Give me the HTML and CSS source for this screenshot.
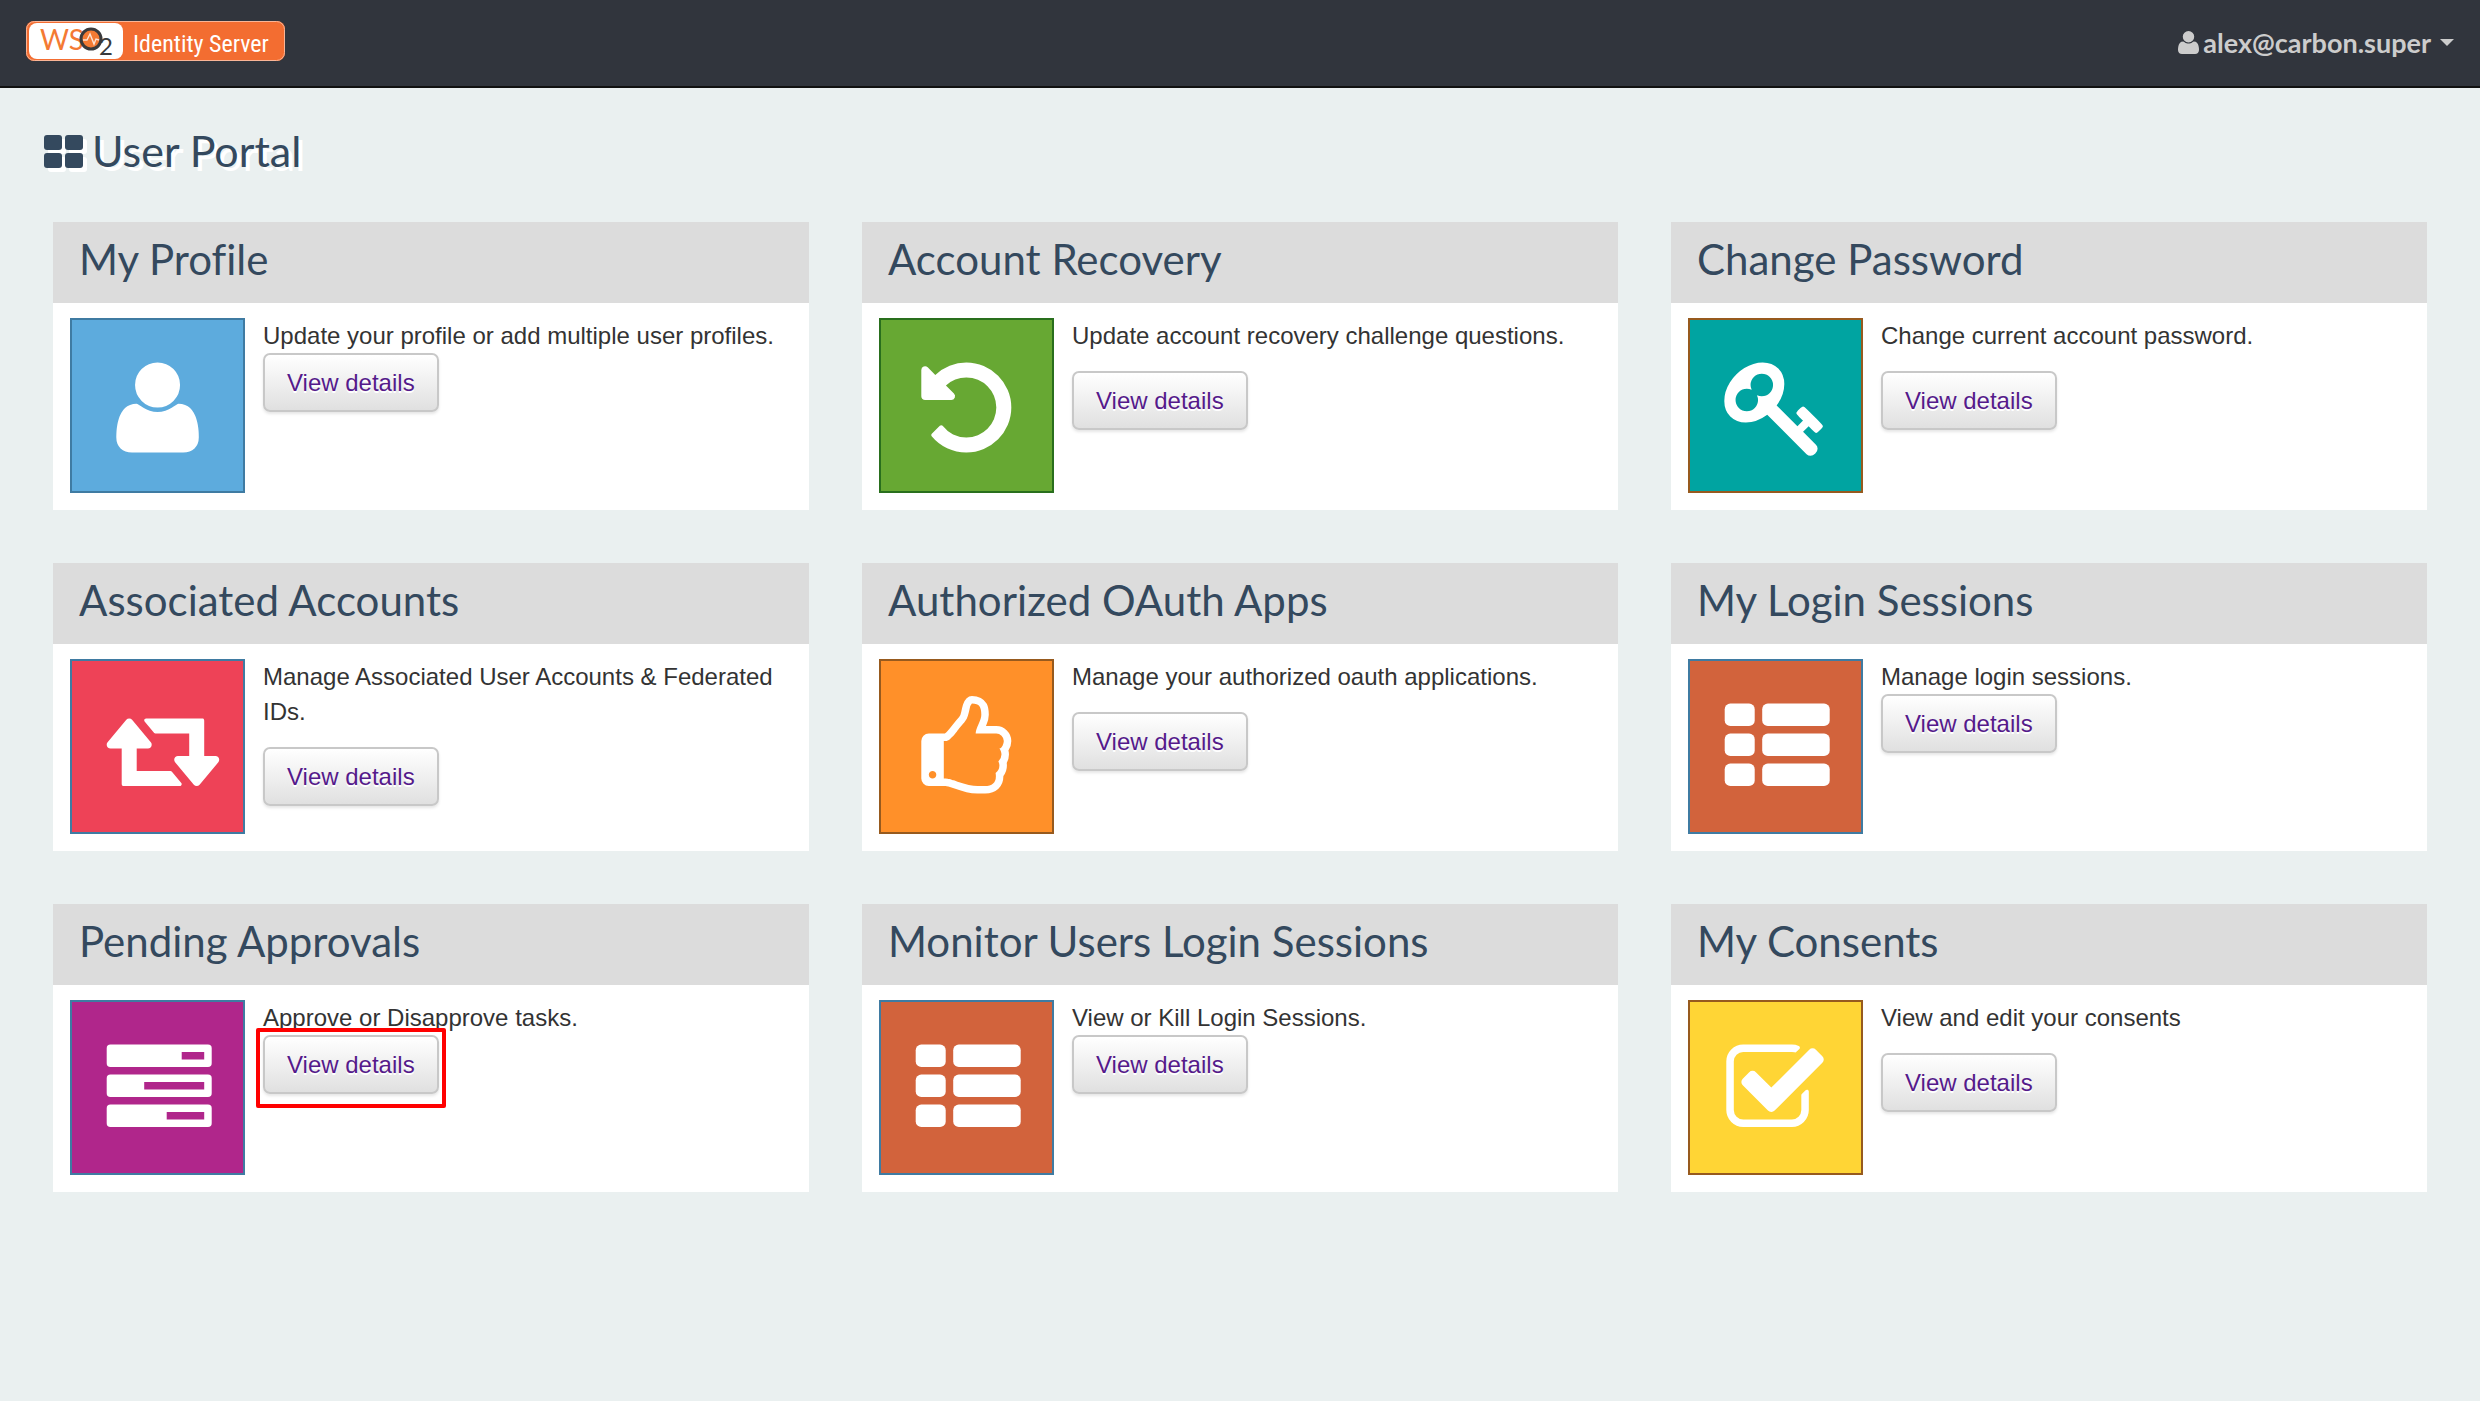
FILE: index.html
```html
<!DOCTYPE html>
<html lang="en">
<head>
<meta charset="utf-8">
<meta name="viewport" content="width=device-width, initial-scale=1">
<title>WSO2 Identity Server - User Portal</title>
<link rel="stylesheet" href="styles.css">
</head>
<body>
<header class="navbar">
  <a class="brand" href="#" aria-label="WSO2 Identity Server">
    <svg class="brand-logo" viewBox="0 0 259 40">
      <rect width="259" height="40" rx="8" fill="#f36d31"/>
      <rect x=".5" y=".5" width="258" height="39" rx="8" fill="none" stroke="#f9b597" stroke-width="1"/>
      <rect x="3" y="2" width="94" height="36" rx="8" fill="#fff"/>
      <text class="logo-ws" x="14" y="29">WS</text>
      <circle cx="65" cy="18" r="10" fill="#f47a33" stroke="#3a3a3c" stroke-width="3"/>
      <path d="M57 19h4l3-6 4 10 2-5 3 1" fill="none" stroke="#fde3d5" stroke-width="1.4"/>
      <text class="logo-two" x="73" y="34">2</text>
      <text class="logo-name" x="107" y="31">Identity Server</text>
    </svg>
  </a>
  <button class="user-menu" type="button">
    <svg class="user-icon" viewBox="0 0 1408 1536"><use href="#i-user" transform="translate(0 1408) scale(1 -1)"/></svg>
    <span>alex@carbon.super</span>
    <span class="caret"></span>
  </button>
</header>

<svg class="sprite" aria-hidden="true">
  <defs>
    <path id="i-user" d="M1408 131q0 -120 -73 -189.5t-194 -69.5h-874q-121 0 -194 69.5t-73 189.5q0 53 3.5 103.5t14 109t26.5 108.5t43 97.5t62 81t85.5 53.5t111.5 20q9 0 42 -21.5t74.5 -48t108 -48t133.5 -21.5t133.5 21.5t108 48t74.5 48t42 21.5q61 0 111.5 -20t85.5 -53.5t62 -81t43 -97.5t26.5 -108.5t14 -109t3.5 -103.5zM1088 1024q0 -159 -112.5 -271.5t-271.5 -112.5t-271.5 112.5t-112.5 271.5t112.5 271.5t271.5 112.5t271.5 -112.5t112.5 -271.5z"/>
    <g id="i-list">
      <rect y="0" width="512" height="384" rx="96"/><rect x="640" y="0" width="1152" height="384" rx="96"/>
      <rect y="512" width="512" height="384" rx="96"/><rect x="640" y="512" width="1152" height="384" rx="96"/>
      <rect y="1024" width="512" height="384" rx="96"/><rect x="640" y="1024" width="1152" height="384" rx="96"/>
    </g>
  </defs>
</svg>

<main class="page">
  <h1 class="page-title">
    <svg class="title-icon" viewBox="0 0 40 33"><rect width="18" height="15" rx="3"/><rect x="21" width="18" height="15" rx="3"/><rect y="18" width="18" height="15" rx="3"/><rect x="21" y="18" width="18" height="15" rx="3"/></svg>
    <span>User Portal</span>
  </h1>

  <div class="cards">
    <section class="card">
      <h2 class="card-title">My Profile</h2>
      <div class="card-body">
        <div class="tile tile-blue"><svg viewBox="2 2 171 171"><use href="#i-user" transform="translate(46.3 127) scale(.0586 -.0586)"/></svg></div>
        <div class="info compact"><p>Update your profile or add multiple user profiles.</p><a class="btn" href="#">View details</a></div>
      </div>
    </section>

    <section class="card">
      <h2 class="card-title">Account Recovery</h2>
      <div class="card-body">
        <div class="tile tile-green"><svg viewBox="2 2 171 171"><path transform="translate(42.3 127) scale(.0586 -.0586)" d="M1536 640q0 -156 -61 -298t-164 -245t-245 -164t-298 -61q-172 0 -327 72.5t-264 204.5q-7 10 -6.5 22.5t8.5 20.5l137 138q10 9 25 9q16 -2 23 -12q73 -95 179 -147t225 -52q104 0 198.5 40.5t163.5 109.5t109.5 163.5t40.5 198.5t-40.5 198.5t-109.5 163.5t-163.5 109.5t-198.5 40.5q-98 0 -188 -35.5t-160 -101.5l137 -138q31 -30 14 -69q-17 -40 -59 -40h-448q-26 0 -45 19t-19 45v448q0 42 40 59q39 17 69 -14l130 -129q107 101 244.5 156.5t284.5 55.5q156 0 298 -61t245 -164t164 -245t61 -298z"/></svg></div>
        <div class="info"><p>Update account recovery challenge questions.</p><a class="btn" href="#">View details</a></div>
      </div>
    </section>

    <section class="card">
      <h2 class="card-title">Change Password</h2>
      <div class="card-body">
        <div class="tile tile-teal"><svg viewBox="2 2 171 171"><path transform="translate(36.3 127) scale(.0586 -.0586)" d="M832 1024q0 80 -56 136t-136 56t-136 -56t-56 -136q0 -42 19 -83q-41 19 -83 19q-80 0 -136 -56t-56 -136t56 -136t136 -56t136 56t56 136q0 42 -19 83q41 -19 83 -19q80 0 136 56t56 136zM1683 320q0 -17 -49 -66t-66 -49q-9 0 -28.5 16t-36.5 33t-38.5 40t-24.5 26l-96 -96l220 -220q28 -28 28 -68q0 -42 -39 -81t-81 -39q-40 0 -68 28l-671 671q-176 -131 -365 -131q-163 0 -265.5 102.5t-102.5 265.5q0 160 95 313t248 248t313 95q163 0 265.5 -102.5t102.5 -265.5q0 -189 -131 -365l355 -355l96 96q-3 3 -26 24.5t-40 38.5t-33 36.5t-16 28.5q0 17 49 66t66 49q13 0 23 -10q6 -6 46 -44.5t82 -79.5t86.5 -86t73 -78t28.5 -41z"/></svg></div>
        <div class="info"><p>Change current account password.</p><a class="btn" href="#">View details</a></div>
      </div>
    </section>

    <section class="card">
      <h2 class="card-title">Associated Accounts</h2>
      <div class="card-body">
        <div class="tile tile-red"><svg viewBox="2 2 171 171"><path transform="translate(36.7 127) scale(.0586 -.0586)" d="M1280 32q0 -13 -9.5 -22.5t-22.5 -9.5h-960q-8 0 -13.5 2t-9 7t-5.5 8t-3 11.5t-1 11.5v13v11v160v416h-192q-26 0 -45 19t-19 45q0 24 15 41l320 384q19 22 49 22t49 -22l320 -384q15 -17 15 -41q0 -26 -19 -45t-45 -19h-192v-384h576q16 0 25 -11l160 -192q7 -10 7 -21zM1920 448q0 -24 -15 -41l-320 -384q-20 -23 -49 -23t-49 23l-320 384q-15 17 -15 41q0 26 19 45t45 19h192v384h-576q-16 0 -25 12l-160 192q-7 9 -7 20q0 13 9.5 22.5t22.5 9.5h960q8 0 13.5 -2t9 -7t5.5 -8t3 -11.5t1 -11.5v-13v-11v-160v-416h192q26 0 45 -19t19 -45z"/></svg></div>
        <div class="info"><p>Manage Associated User Accounts &amp; Federated IDs.</p><a class="btn" href="#">View details</a></div>
      </div>
    </section>

    <section class="card">
      <h2 class="card-title">Authorized OAuth Apps</h2>
      <div class="card-body">
        <div class="tile tile-orange"><svg viewBox="2 2 171 171"><path transform="translate(42.3 127) scale(.0586 -.0586)" d="M256 192q0 26 -19 45t-45 19t-45 -19t-19 -45t19 -45t45 -19t45 19t19 45zM1408 768q0 51 -39 89.5t-89 38.5h-352q0 58 48 159.5t48 160.5q0 98 -32 145t-128 47q-26 -26 -38 -85t-30.5 -125.5t-59.5 -109.5q-22 -23 -77 -91q-4 -5 -23 -30t-31.5 -41t-34.5 -42.5t-40 -44t-38.5 -35.5t-40 -27t-35.5 -9h-32v-640h32q13 0 31.5 -3t33 -6.5t38 -11t35 -11.5t35.5 -12.5t29 -10.5q211 -73 342 -73h121q192 0 192 167q0 26 -5 56q30 16 47.5 52.5t17.5 73.5t-18 69q53 50 53 119q0 25 -10 55.5t-25 47.5q32 1 53.5 47t21.5 81zM1536 769q0 -89 -49 -163q9 -33 9 -69q0 -77 -38 -144q3 -21 3 -43q0 -101 -60 -178q1 -139 -85 -219.5t-227 -80.5h-36h-93q-96 0 -189.5 22.5t-216.5 65.5q-116 40 -138 40h-288q-53 0 -90.5 37.5t-37.5 90.5v640q0 53 37.5 90.5t90.5 37.5h274q36 24 137 155q58 75 107 128q24 25 35.5 85.5t30.5 126.5t62 108q39 37 90 37q84 0 151 -32.5t102 -101.5t35 -186q0 -93 -48 -192h176q104 0 180 -76t76 -179z"/></svg></div>
        <div class="info"><p>Manage your authorized oauth applications.</p><a class="btn" href="#">View details</a></div>
      </div>
    </section>

    <section class="card">
      <h2 class="card-title">My Login Sessions</h2>
      <div class="card-body">
        <div class="tile tile-rust"><svg viewBox="2 2 171 171"><use href="#i-list" transform="translate(36.7 44.5) scale(.0586)"/></svg></div>
        <div class="info compact"><p>Manage login sessions.</p><a class="btn" href="#">View details</a></div>
      </div>
    </section>

    <section class="card">
      <h2 class="card-title">Pending Approvals</h2>
      <div class="card-body">
        <div class="tile tile-purple"><svg viewBox="2 2 171 171"><path fill-rule="evenodd" transform="translate(36.7 44.5) scale(.0586)" d="M64 0h1664q64 0 64 64v256q0 64 -64 64h-1664q-64 0 -64 -64v-256q0 -64 64 -64zM1280 128v128h384v-128zM64 512h1664q64 0 64 64v256q0 64 -64 64h-1664q-64 0 -64 -64v-256q0 -64 64 -64zM640 640v128h1024v-128zM64 1024h1664q64 0 64 64v256q0 64 -64 64h-1664q-64 0 -64 -64v-256q0 -64 64 -64zM1024 1152v128h640v-128z"/></svg></div>
        <div class="info compact"><p>Approve or Disapprove tasks.</p><a class="btn highlighted" href="#">View details</a></div>
      </div>
    </section>

    <section class="card">
      <h2 class="card-title">Monitor Users Login Sessions</h2>
      <div class="card-body">
        <div class="tile tile-rust"><svg viewBox="2 2 171 171"><use href="#i-list" transform="translate(36.7 44.5) scale(.0586)"/></svg></div>
        <div class="info compact"><p>View or Kill Login Sessions.</p><a class="btn" href="#">View details</a></div>
      </div>
    </section>

    <section class="card">
      <h2 class="card-title">My Consents</h2>
      <div class="card-body">
        <div class="tile tile-yellow"><svg viewBox="2 2 171 171"><path transform="translate(38.3 127) scale(.0586 -.0586)" d="M1408 606v-318q0 -119 -84.5 -203.5t-203.5 -84.5h-832q-119 0 -203.5 84.5t-84.5 203.5v832q0 119 84.5 203.5t203.5 84.5h832q63 0 117 -25q15 -7 18 -23q3 -17 -9 -29l-49 -49q-14 -14 -32 -8q-23 6 -45 6h-832q-66 0 -113 -47t-47 -113v-832q0 -66 47 -113t113 -47h832q66 0 113 47t47 113v254q0 13 9 22l64 64q15 15 35 7t20 -29zM1639 1095l-814 -814q-24 -24 -57 -24t-57 24l-430 430q-24 24 -24 57t24 57l110 110q24 24 57 24t57 -24l263 -263l647 647q24 24 57 24t57 -24l110 -110q24 -24 24 -57t-24 -57z"/></svg></div>
        <div class="info"><p>View and edit your consents</p><a class="btn" href="#">View details</a></div>
      </div>
    </section>
  </div>
</main>
</body>
</html>
```
FILE: styles.css
```css
* { box-sizing: border-box; }

body {
  margin: 0;
  min-height: 100vh;
  background: #eaf0f0;
  color: #333;
  font: 24px/35px "Liberation Sans", Arial, sans-serif;
}

.sprite { position: absolute; width: 0; height: 0; }

/* Top bar */
.navbar {
  display: flex;
  align-items: center;
  justify-content: space-between;
  min-height: 88px;
  padding: 0 26px;
  background: #31353d;
  border-bottom: 2px solid #111;
}
.brand { display: flex; padding-bottom: 4px; }
.brand-logo { width: 259px; height: 40px; }
.logo-ws { font: 400 28px Lato, sans-serif; fill: #f47a33; }
.logo-two { font: 400 24px Lato, sans-serif; fill: #3a3a3c; }
.logo-name { font: 400 24px "Liberation Sans Narrow", "Roboto Condensed", sans-serif; fill: #fff; }

.user-menu {
  display: flex;
  align-items: center;
  gap: 4px;
  padding: 0 0 2px;
  border: 0;
  background: none;
  color: #ccc;
  font: 700 27px/35px Lato, sans-serif;
}
.user-icon { width: 21px; height: 23px; fill: currentColor; }
.caret {
  margin-left: 5px;
  border: 7px solid transparent;
  border-top-color: currentColor;
  border-bottom: 0;
}

/* Page heading */
.page { padding: 38px 53px 53px; }
.page-title {
  display: flex;
  align-items: center;
  gap: 8px;
  margin: 0 0 46px -9px;
  color: #34495e;
  font: 400 43px/50px Lato, sans-serif;
  text-shadow: 4px 4px 0 #fff;
}
.title-icon {
  width: 40px;
  height: 33px;
  fill: currentColor;
  filter: drop-shadow(4px 4px 0 #fff);
}

/* Cards */
.cards {
  display: grid;
  grid-template-columns: repeat(3, 1fr);
  gap: 53px;
}
.card { background: #fff; }
.card-title {
  margin: 0;
  padding: 14px 26px 21px;
  background: #dcdcdc;
  color: #34495e;
  font: 400 42px/46px Lato, sans-serif;
  font-variant-ligatures: none;
}
.card-body {
  display: flex;
  gap: 18px;
  padding: 15px 17px 17px;
}
.tile {
  flex: none;
  width: 175px;
  height: 175px;
  border: 2px solid #3f7ba2;
}
.tile svg { display: block; width: 100%; height: 100%; fill: #fff; }
.tile-blue { background: #5dabdd; }
.tile-green { background: #67a833; border-color: #296f1d; }
.tile-teal { background: #00a4a1; border-color: #975a1e; }
.tile-red { background: #ee4257; }
.tile-orange { background: #ff9029; border-color: #975a1e; }
.tile-rust { background: #d2633c; }
.tile-purple { background: #b0268b; }
.tile-yellow { background: #ffd535; border-color: #975a1e; }

.info p { margin: 0 0 18px; }
.compact p { margin-bottom: 0; }

.btn {
  display: inline-block;
  position: relative;
  padding: 10px 22px;
  border: 2px solid #c8c8c8;
  border-radius: 7px;
  background: linear-gradient(#fff, #e0e0e0);
  box-shadow: 0 2px 3px rgba(0, 0, 0, .1);
  color: #551a8b;
  text-decoration: none;
  text-shadow: 0 2px 0 #fff;
}
.highlighted::after {
  content: "";
  position: absolute;
  inset: -9px -9px -16px;
  border: 4px solid #f00;
  border-radius: 2px;
}
```
